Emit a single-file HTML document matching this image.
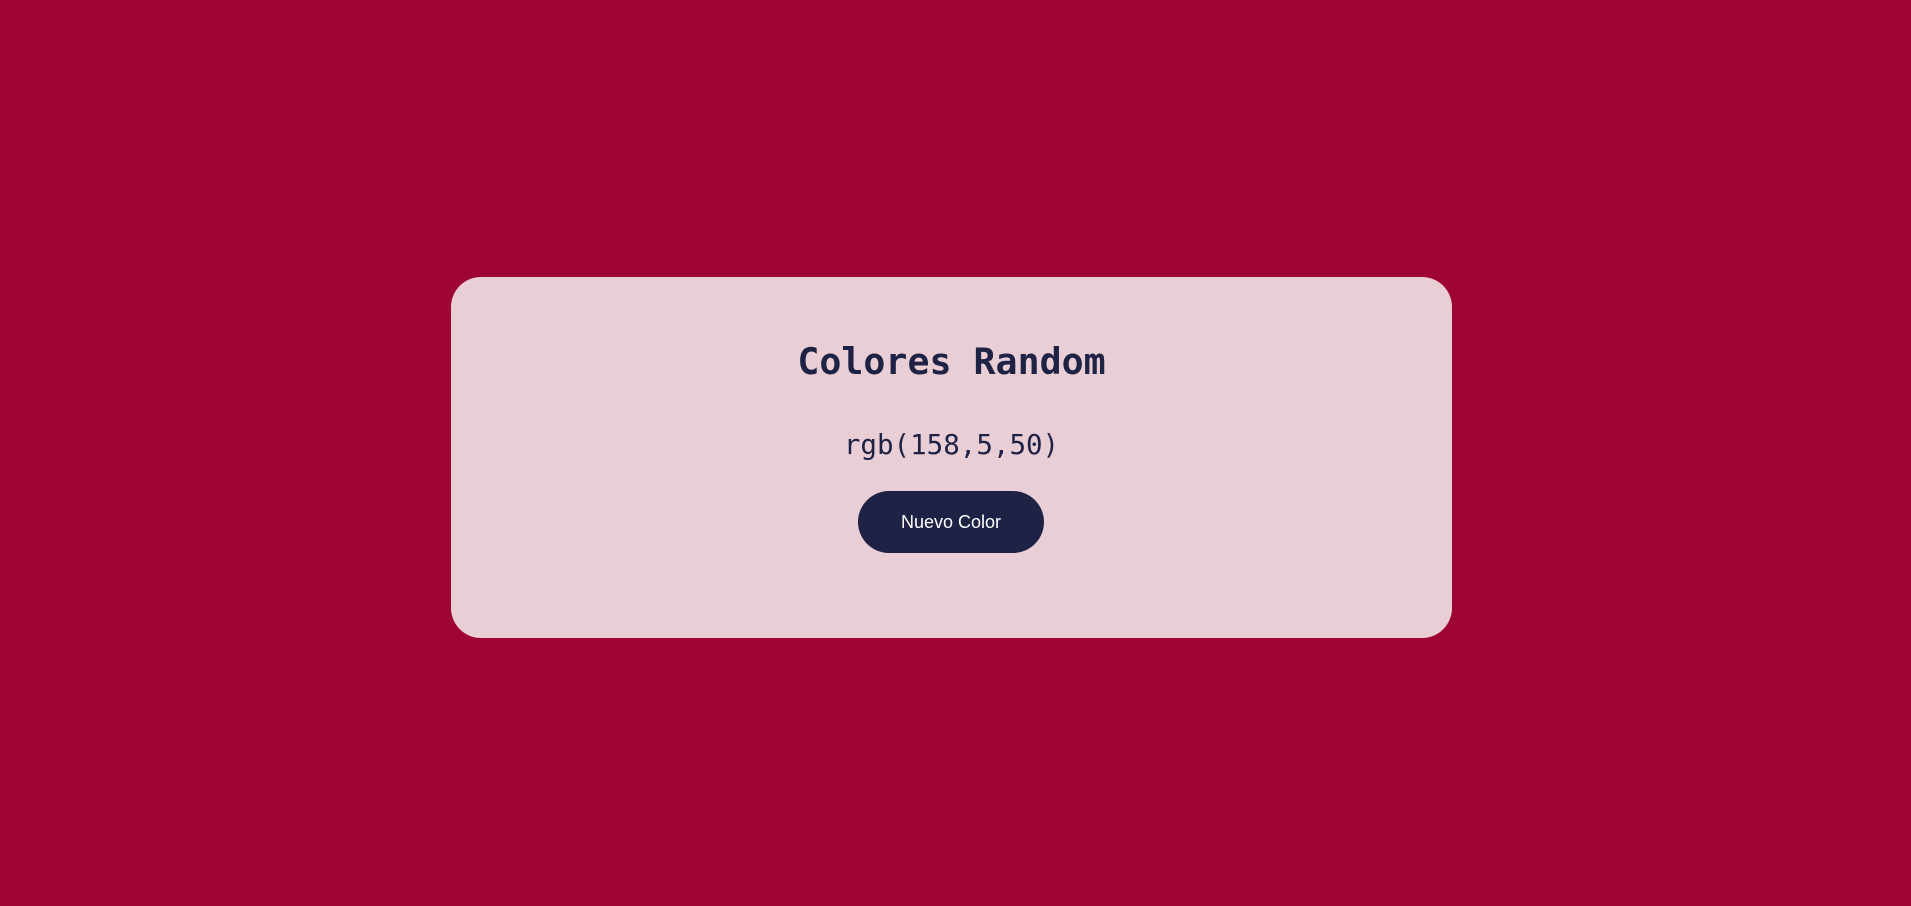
<!DOCTYPE html>
<html><head><meta charset="utf-8"><style>
html,body{margin:0;padding:0;width:1911px;height:906px;background:#9e0532;overflow:hidden}
.card{position:absolute;left:451px;top:277px;width:1001px;height:361px;background:#eaced5;border-radius:30px}
h1{position:absolute;left:451px;width:1001px;top:337px;margin:0;text-align:center;font:bold 36.6px/50px "DejaVu Sans Mono","Liberation Mono",monospace;color:#1e2245}
.rgb{position:absolute;left:451px;width:1001px;top:425px;text-align:center;font:27.5px/40px "DejaVu Sans Mono","Liberation Mono",monospace;color:#1e2245}
.btn{position:absolute;left:858px;top:491px;width:186px;height:62px;border-radius:31px;background:#1e2245;color:#fff;font:18px/62px "Liberation Sans",sans-serif;text-align:center}
</style></head><body>
<div class="card"></div>
<h1>Colores Random</h1>
<div class="rgb">rgb(158,5,50)</div>
<div class="btn">Nuevo Color</div>
</body></html>
